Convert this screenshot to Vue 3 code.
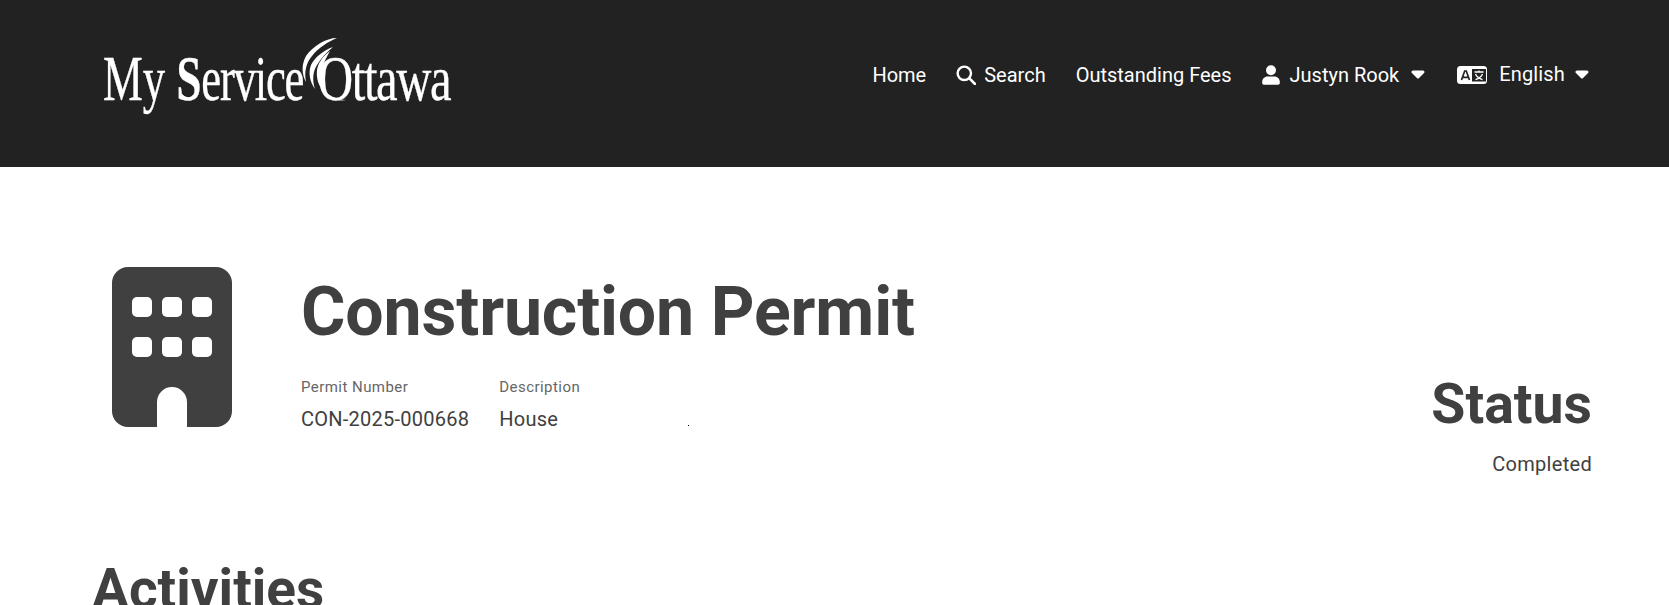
<template>
  <div class="page">
    <header class="site-header">
      <a href="#" class="logo" aria-label="My Service Ottawa">
        <svg width="356" height="85" viewBox="100 30 356 85">
          <text transform="translate(103 100) scale(.7 1)" class="logo-text">My <tspan font-weight="700">S</tspan><tspan letter-spacing="-1.8">ervice</tspan></text>
          <text transform="translate(318 100) scale(.76 1)" class="logo-text" letter-spacing="-1.8">Ottawa</text>
          <g fill="#fff">
            <path d="M337 38C326 38 313 46 306 56C301 65 302 75 306 82C304 72 306 63 312 56C319 47 328 42 337 38Z" />
            <path d="M333 47C324 50 315 57 311 65C308 73 310 82 315 89C312 80 313 71 317 65C321 58 327 52 333 47Z" />
            <path d="M330 51C323 56 318 63 317 70C316 79 319 87 325 93C321 85 320 76 322 69C324 62 327 56 330 51Z" />
            <path d="M320 88C326 97 336 102 346 100C337 100 328 95 320 88Z" />
          </g>
        </svg>
      </a>
      <nav class="main-nav">
        <a href="#" class="nav-link">Home</a>
        <a href="#" class="nav-link">
          <svg class="nav-icon" width="20" height="20" viewBox="0 0 20 20">
            <circle cx="8.3" cy="8.3" r="6.7" fill="none" stroke="#fff" stroke-width="2.4" />
            <path d="M13.2 13.2L19 19" stroke="#fff" stroke-width="2.6" stroke-linecap="round" />
          </svg>
          Search
        </a>
        <a href="#" class="nav-link">Outstanding Fees</a>
        <a href="#" class="nav-link">
          <svg class="nav-icon user-icon" width="18" height="20" viewBox="0 0 18 20" fill="#fff">
            <circle cx="9" cy="5.2" r="5" />
            <path d="M5.5 11.5h7c3 0 5.3 2.4 5.3 5.3v1.2c0 1-.8 1.7-1.7 1.7H1.9C1 19.7.2 19 .2 18v-1.2c0-2.9 2.4-5.3 5.3-5.3z" />
          </svg>
          Justyn Rook
          <svg class="caret" width="14" height="9" viewBox="0 0 14 9">
            <path d="M2 2h10L7 7z" fill="#fff" stroke="#fff" stroke-width="3" stroke-linejoin="round" />
          </svg>
        </a>
        <a href="#" class="nav-link lang">
          <svg class="nav-icon" width="30" height="18" viewBox="0 0 30 18">
            <rect width="30" height="18" rx="3.5" fill="#fff" />
            <path d="M4.5 14L7.7 5h1.6l3.2 9M5.8 11.3h5.4" fill="none" stroke="#222" stroke-width="1.7" />
            <rect x="15" y="3" width="14" height="12.5" fill="#222" />
            <path d="M17.5 6h9M22 4.5V6M18.5 8c1 2.4 3.4 4.4 7 5.6M25.5 8c-1 2.4-3.4 4.4-7 5.6" fill="none" stroke="#fff" stroke-width="1.3" />
          </svg>
          <span class="lang-label">English</span>
          <svg class="caret" width="14" height="9" viewBox="0 0 14 9">
            <path d="M2 2h10L7 7z" fill="#fff" stroke="#fff" stroke-width="3" stroke-linejoin="round" />
          </svg>
        </a>
      </nav>
    </header>

    <main class="content">
      <section class="permit">
        <svg class="permit-icon" width="120" height="160" viewBox="0 0 120 160">
          <path
            fill="#404040"
            d="M16 0h88a16 16 0 0 1 16 16v128a16 16 0 0 1-16 16H75v-25a15 15 0 0 0-30 0v25H16a16 16 0 0 1-16-16V16A16 16 0 0 1 16 0z"
          />
          <g fill="#fff">
            <rect v-for="w in windows" :key="w.x + '-' + w.y" :x="w.x" :y="w.y" width="20" height="20" rx="5" />
          </g>
        </svg>
        <div class="permit-main">
          <h1 class="permit-title">Construction Permit</h1>
          <div class="permit-fields">
            <div class="field">
              <div class="field-label">Permit Number</div>
              <div class="field-value">CON-2025-000668</div>
            </div>
            <div class="field">
              <div class="field-label">Description</div>
              <div class="field-value">House<span class="speck"></span></div>
            </div>
          </div>
        </div>
        <div class="permit-status">
          <h2 class="status-title">Status</h2>
          <div class="status-value">Completed</div>
        </div>
      </section>
      <h2 class="section-title">Activities</h2>
    </main>
  </div>
</template>

<script setup>
const windows = [
  { x: 20, y: 30 },
  { x: 50, y: 30 },
  { x: 80, y: 30 },
  { x: 20, y: 70 },
  { x: 50, y: 70 },
  { x: 80, y: 70 },
]
</script>

<style>
html,
body {
  margin: 0;
  background: #fff;
  overflow: hidden;
}
</style>

<style scoped>
.page {
  height: 605px;
  overflow: hidden;
  font-family: Roboto, "Liberation Sans", sans-serif;
  color: #404040;
}

.site-header {
  height: 167px;
  background: #222;
  display: flex;
  justify-content: space-between;
  padding: 0 80px 0 100px;
  box-sizing: border-box;
}

.logo {
  display: block;
  padding-top: 30px;
}

.logo-text {
  font-family: "Liberation Serif", serif;
  font-size: 64px;
  fill: #fff;
  stroke: #fff;
  stroke-width: 0.35;
}

.main-nav {
  display: flex;
  align-items: center;
  gap: 30px;
  padding-bottom: 18px;
}

.nav-link {
  display: flex;
  align-items: center;
  color: #fff;
  text-decoration: none;
  font-size: 20px;
  line-height: 24px;
}

.nav-icon {
  margin-right: 8px;
}

.user-icon {
  margin-right: 10px;
}

.lang {
  margin-left: 2px;
}

.lang .nav-icon {
  margin-right: 12px;
}

.lang-label {
  position: relative;
  top: -1px;
  letter-spacing: 0.15px;
}

.caret {
  margin-left: 12px;
}

.lang .caret {
  margin-left: 10px;
}

.content {
  padding: 0 77px 0 92px;
}

.permit {
  display: flex;
  padding-top: 100px;
}

.permit-icon {
  margin: 0 70px 0 20px;
  flex: none;
}

.permit-main {
  flex: 1;
  padding-top: 2px;
}

.permit-title {
  margin: 0 0 0 -1px;
  font-size: 68px;
  line-height: 86px;
  font-weight: 700;
  letter-spacing: -0.15px;
}

.permit-fields {
  display: flex;
  gap: 30px;
  margin: 22px 0 0 -1px;
}

.field-label {
  font-size: 15px;
  line-height: 20px;
  color: #666;
  letter-spacing: 0.45px;
}

.field-value {
  position: relative;
  margin-top: 10px;
  font-size: 20px;
  line-height: 24px;
  letter-spacing: 0.25px;
}

.speck {
  position: absolute;
  left: 189px;
  top: 18px;
  width: 1px;
  height: 1px;
  background: #000;
}

.permit-status {
  text-align: right;
  padding-top: 105px;
}

.status-title {
  margin: 0;
  font-size: 55.4px;
  line-height: 66px;
  font-weight: 700;
}

.status-value {
  margin-top: 14px;
  font-size: 20px;
  line-height: 24px;
  letter-spacing: 0.3px;
}

.section-title {
  margin: 80px 0 0;
  font-size: 55px;
  line-height: 66px;
  font-weight: 700;
}
</style>
